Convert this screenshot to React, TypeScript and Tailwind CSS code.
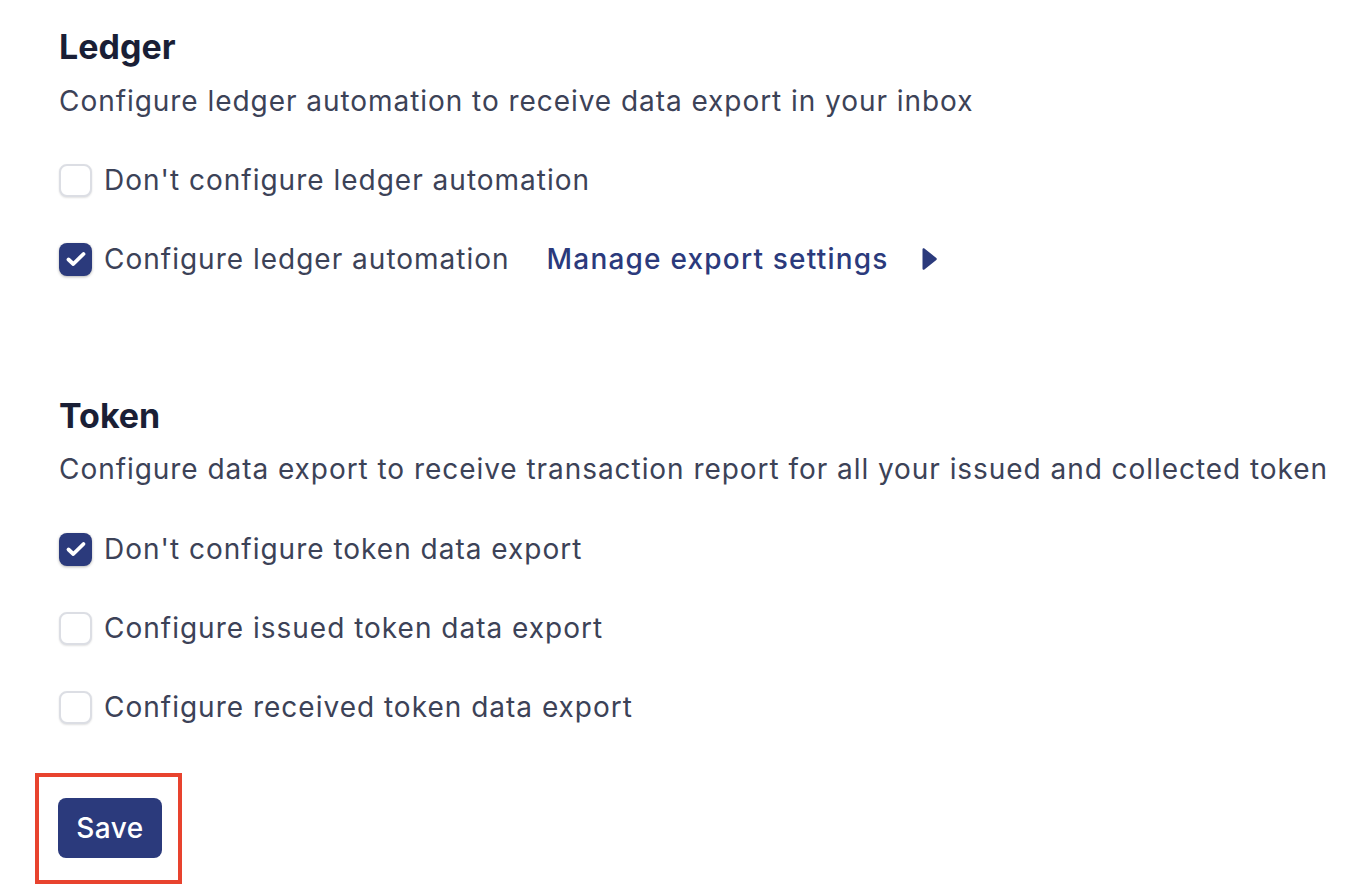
import React, { useState } from "react";

type Opt = { id: string; label: string };

const ledgerOpts: Opt[] = [
  { id: "none", label: "Don't configure ledger automation" },
  { id: "on", label: "Configure ledger automation" },
];

const tokenOpts: Opt[] = [
  { id: "none", label: "Don't configure token data export" },
  { id: "issued", label: "Configure issued token data export" },
  { id: "received", label: "Configure received token data export" },
];

const Box = ({ checked }: { checked: boolean }) => (
  <span
    className={
      checked
        ? "flex h-[33px] w-[33px] shrink-0 items-center justify-center rounded-[8px] bg-[#2b3a7c] shadow-[0_1px_3px_rgba(0,0,0,0.3)]"
        : "flex h-[33px] w-[33px] shrink-0 items-center justify-center rounded-[8px] border-2 border-[#dcdee4] bg-white shadow-[0_1px_2px_rgba(0,0,0,0.12)]"
    }
  >
    {checked && (
      <svg width="24" height="24" viewBox="0 0 24 24" fill="none">
        <path d="M4.5 12.5l4.8 4.5L19.5 7" stroke="white" strokeWidth="3.8" strokeLinecap="round" strokeLinejoin="round" />
      </svg>
    )}
  </span>
);

const Row = ({ opt, checked, onClick, children }: { opt: Opt; checked: boolean; onClick: () => void; children?: React.ReactNode }) => (
  <div className="flex h-[40px] items-center">
    <button onClick={onClick} className="flex items-center gap-[12px] text-left">
      <Box checked={checked} />
      <span className="text-[28px] tracking-[1px] text-[#3c4257]">{opt.label}</span>
    </button>
    {children}
  </div>
);

export default function App() {
  const [ledger, setLedger] = useState("on");
  const [token, setToken] = useState("none");

  return (
    <div className="min-h-screen bg-white pl-[59px] pt-[27px]" style={{ fontFamily: "Inter, 'Noto Sans', sans-serif" }}>
      <h2 className="text-[34px] font-bold leading-[40px] text-[#1a1f36]">Ledger</h2>
      <p className="mt-[16px] text-[28px] leading-[36px] tracking-[0.95px] text-[#3c4257]">
        Configure ledger automation to receive data export in your inbox
      </p>
      <div className="mt-[41px] flex flex-col gap-[39px]">
        {ledgerOpts.map((o) => (
          <Row key={o.id} opt={o} checked={ledger === o.id} onClick={() => setLedger(o.id)}>
            {o.id === "on" && (
              <a href="#" className="ml-[37px] flex items-center gap-[32px] text-[28px] font-medium tracking-[1.2px] text-[#2b3a7c]">
                Manage export settings
                <svg width="17" height="24" viewBox="0 0 17 24">
                  <path d="M1.5 2.5v19c0 1.1 1.1 1.6 1.9 0.9L15.3 13c0.7-0.6 0.7-1.5 0-2.1L3.4 1.6C2.6 0.9 1.5 1.4 1.5 2.5z" fill="#2b3a7c" />
                </svg>
              </a>
            )}
          </Row>
        ))}
      </div>

      <h2 className="mt-[117px] text-[34px] font-bold leading-[40px] text-[#1a1f36]">Token</h2>
      <p className="mt-[15px] text-[28px] leading-[36px] tracking-[0.95px] text-[#3c4257]">
        Configure data export to receive transaction report for all your issued and collected token
      </p>
      <div className="mt-[42px] flex flex-col gap-[39px]">
        {tokenOpts.map((o) => (
          <Row key={o.id} opt={o} checked={token === o.id} onClick={() => setToken(o.id)} />
        ))}
      </div>

      <div className="-ml-[24px] mt-[46px] inline-block border-4 border-[#e8432e] pb-[22px] pl-[19px] pr-[16px] pt-[21px]">
        <button className="h-[60px] w-[104px] rounded-[8px] bg-[#2b3a7c] text-[28px] font-medium tracking-[0.5px] text-white">
          Save
        </button>
      </div>
    </div>
  );
}
